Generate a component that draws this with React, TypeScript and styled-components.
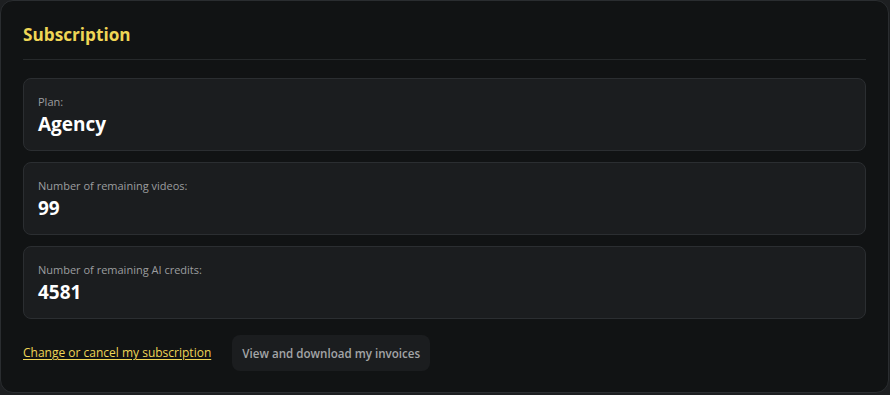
import React from "react";
import styled, { createGlobalStyle } from "styled-components";

const Global = createGlobalStyle`
  html, body { margin: 0; padding: 0; background: #1d1f21; }
  body { font-family: "Open Sans", "Noto Sans", sans-serif; }
  * { box-sizing: border-box; }
`;

const Card = styled.section`
  width: 889px;
  height: 393px;
  background: #111314;
  border: 1px solid #2a2d30;
  border-radius: 13px;
  padding: 0 22px;
  display: flex;
  flex-direction: column;
`;

const Header = styled.div`
  padding-top: 22px;
  padding-bottom: 12px;
  border-bottom: 1px solid #26292b;
`;

const Title = styled.h2`
  margin: 0;
  font-size: 17.2px;
  line-height: 24px;
  font-weight: 700;
  color: #efd656;
`;

const List = styled.div`
  display: flex;
  flex-direction: column;
  gap: 11px;
  margin-top: 18px;
`;

const Stat = styled.div`
  height: 73px;
  background: #1b1d1f;
  border: 1px solid #2b2e31;
  border-radius: 8px;
  padding: 15px 14px 0;
`;

const Label = styled.div`
  font-size: 11px;
  line-height: 16px;
  color: #9b9d9f;
`;

const Value = styled.div`
  font-size: 19px;
  line-height: 26px;
  font-weight: 700;
  color: #ffffff;
  margin-top: 1px;
`;

const Footer = styled.div`
  display: flex;
  align-items: center;
  gap: 21px;
  margin-top: 16px;
`;

const Link = styled.a`
  font-size: 12px;
  line-height: 16px;
  color: #efd656;
  text-decoration: underline;
  text-underline-offset: 2px;
  cursor: pointer;
`;

const Button = styled.button`
  height: 36px;
  width: 198px;
  padding: 0;
  border: none;
  border-radius: 8px;
  background: #1b1d1f;
  color: #a3a5a7;
  font-family: inherit;
  font-size: 11.6px;
  font-weight: 600;
  cursor: pointer;
`;

const stats = [
  { label: "Plan:", value: "Agency" },
  { label: "Number of remaining videos:", value: "99" },
  { label: "Number of remaining AI credits:", value: "4581" },
];

export default function App() {
  return (
    <>
      <Global />
      <Card>
        <Header>
          <Title>Subscription</Title>
        </Header>
        <List>
          {stats.map((s) => (
            <Stat key={s.label}>
              <Label>{s.label}</Label>
              <Value>{s.value}</Value>
            </Stat>
          ))}
        </List>
        <Footer>
          <Link>Change or cancel my subscription</Link>
          <Button>View and download my invoices</Button>
        </Footer>
      </Card>
    </>
  );
}
